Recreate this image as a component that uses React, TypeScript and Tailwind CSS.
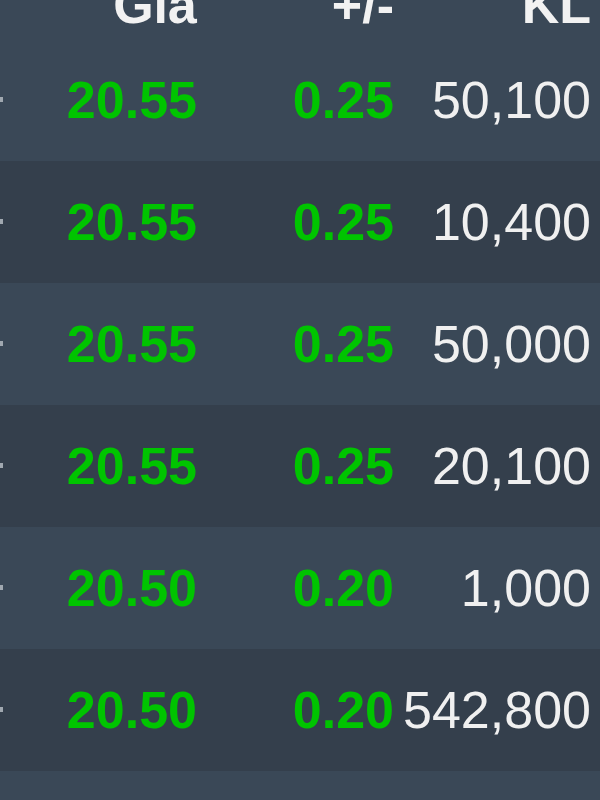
import React from "react";

const rows = [
  { p: "20.55", c: "0.25", v: "50,100" },
  { p: "20.55", c: "0.25", v: "10,400" },
  { p: "20.55", c: "0.25", v: "50,000" },
  { p: "20.55", c: "0.25", v: "20,100" },
  { p: "20.50", c: "0.20", v: "1,000" },
  { p: "20.50", c: "0.20", v: "542,800" },
];

export default function App() {
  return (
    <div
      className="w-[600px] h-[800px] overflow-hidden bg-[#3a4857]"
      style={{ fontFamily: '"Liberation Sans", Arial, sans-serif' }}
    >
      <div className="h-[39px] overflow-hidden">
        <div className="-mt-[21px] flex text-[52px] leading-[52px] font-bold text-[#f2f2f2]">
          <div className="w-[197px] text-right">Giá</div>
          <div className="w-[197px] text-right">+/-</div>
          <div className="w-[197px] text-right">KL</div>
        </div>
      </div>
      {rows.map((r, i) => (
        <div
          key={i}
          className={`relative flex h-[122px] items-center text-[52px] leading-[52px] ${
            i % 2 === 0 ? "bg-[#3a4857]" : "bg-[#343f4c]"
          }`}
        >
          <div className="absolute left-0 top-[58px] h-[5px] w-[3px] bg-[#a0a8b0]" />
          <div className="w-[197px] text-right font-bold text-[#00c400]">{r.p}</div>
          <div className="w-[197px] text-right font-bold text-[#00c400]">{r.c}</div>
          <div className="w-[197px] text-right text-[#f0f0f0]">{r.v}</div>
        </div>
      ))}
      <div className="h-[40px] bg-[#3a4857]" />
    </div>
  );
}
